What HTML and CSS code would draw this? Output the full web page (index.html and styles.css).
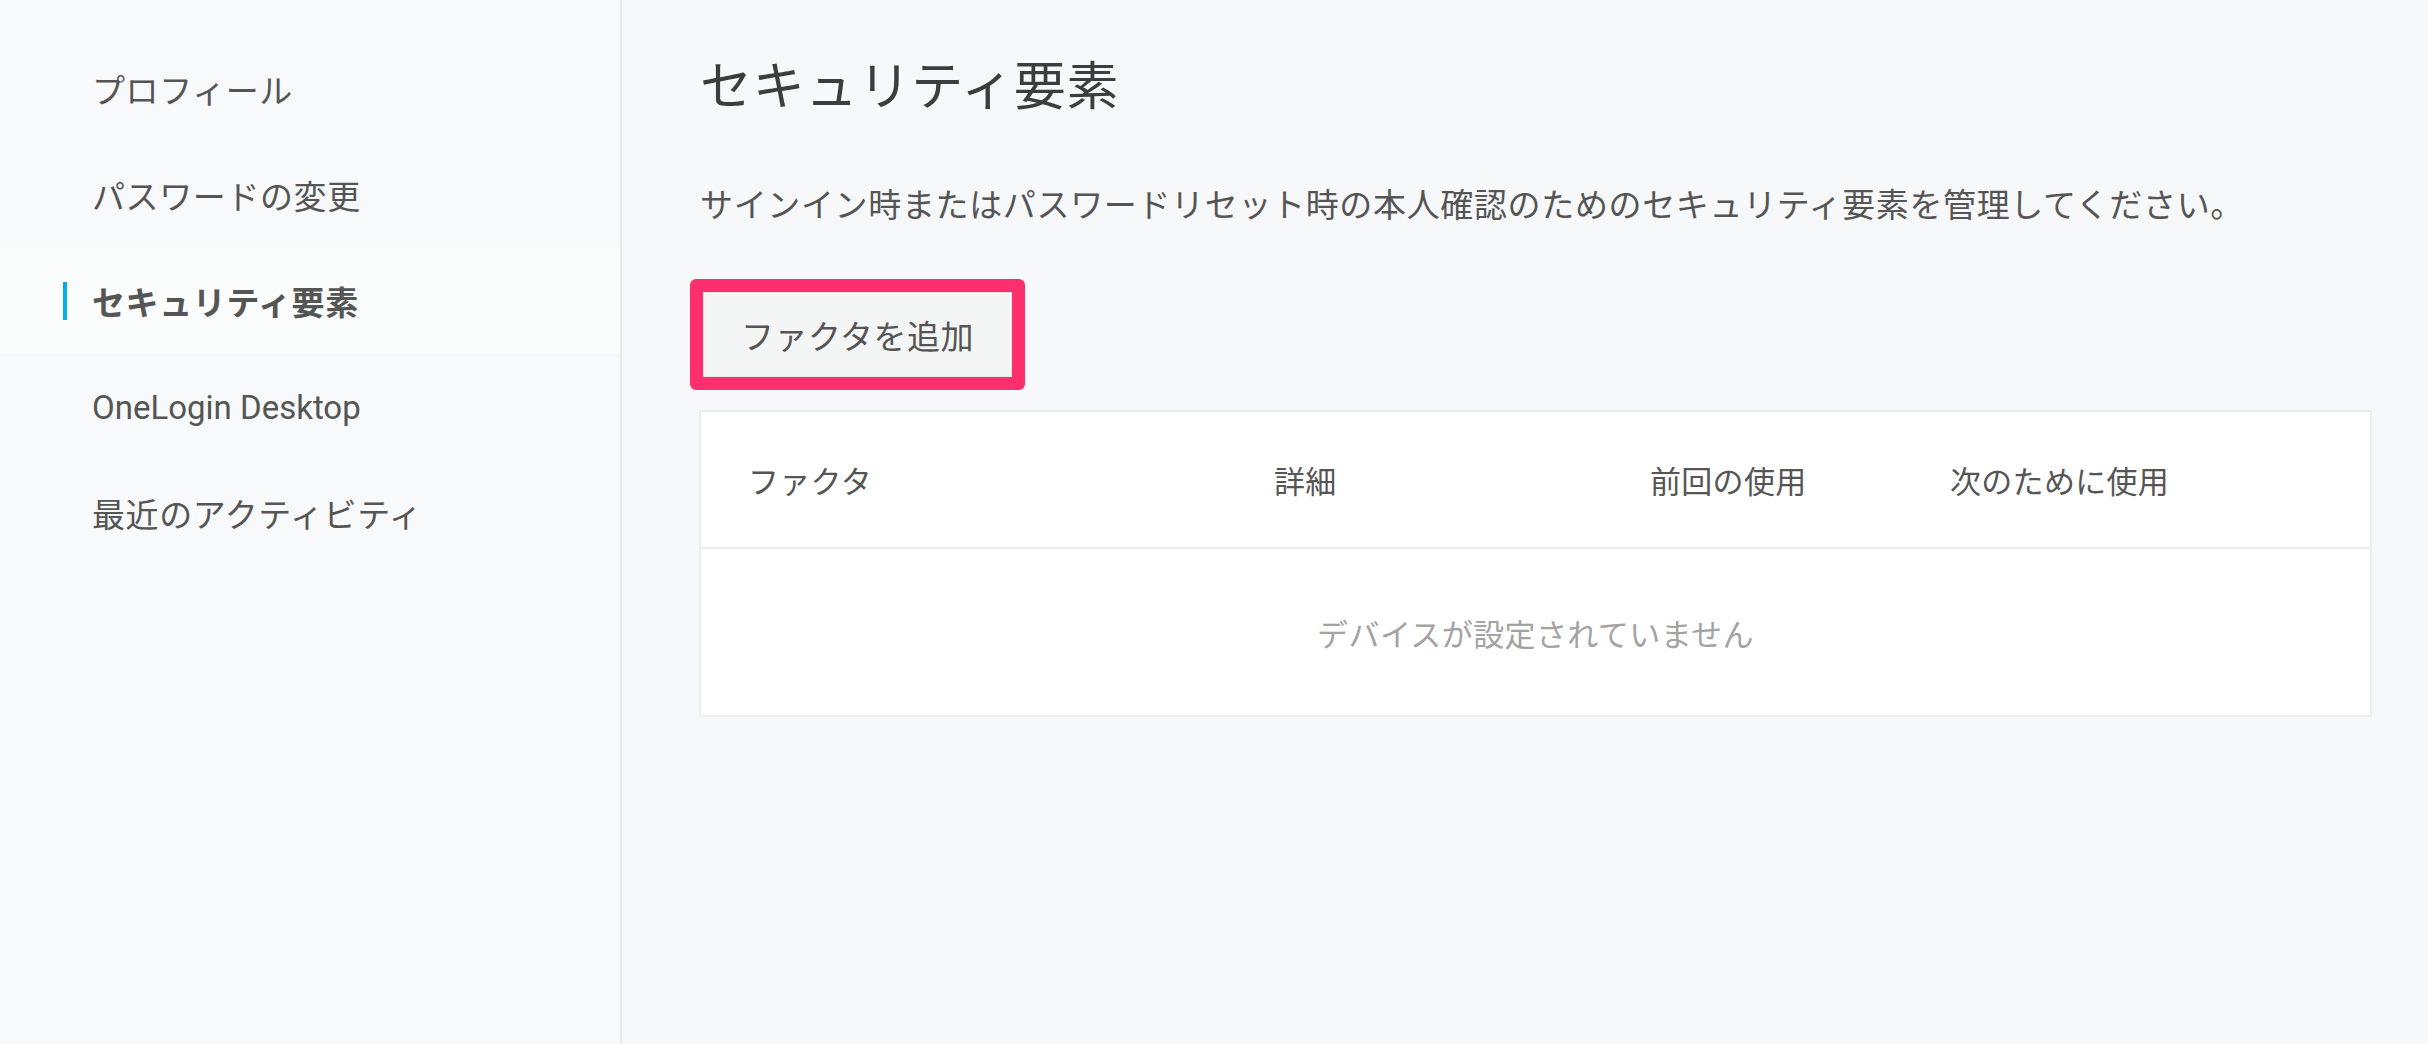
FILE: index.html
```html
<!DOCTYPE html>
<html lang="ja">

<head>
    <meta charset="UTF-8">
    <title>セキュリティ要素</title>
    <link rel="stylesheet" href="styles.css">
</head>

<body>
    <div class="page">
        <nav class="side-nav">
            <ul class="nav-list">
                <li class="nav-item">プロフィール</li>
                <li class="nav-item">パスワードの変更</li>
                <li class="nav-item active">セキュリティ要素</li>
                <li class="nav-item latin">OneLogin Desktop</li>
                <li class="nav-item">最近のアクティビティ</li>
            </ul>
        </nav>

        <main class="content">
            <h1 class="title">セキュリティ要素</h1>
            <p class="lead">サインイン時またはパスワードリセット時の本人確認のためのセキュリティ要素を管理してください。</p>

            <span class="highlight">
                <button class="btn-add">ファクタを追加</button>
            </span>

            <div class="factor-table">
                <div class="table-head">
                    <span>ファクタ</span>
                    <span>詳細</span>
                    <span>前回の使用</span>
                    <span>次のために使用</span>
                </div>
                <div class="table-empty">デバイスが設定されていません</div>
            </div>
        </main>
    </div>
</body>

</html>
```

FILE: styles.css
```css
* {
    box-sizing: border-box;
}

body {
    margin: 0;
    background-color: #f7f8fa;
    font-family: Roboto, "Noto Sans CJK JP", sans-serif;
    color: #555;
}

.page {
    display: flex;
    min-height: 100vh;
}

/* sidebar */
.side-nav {
    width: 622px;
    flex-shrink: 0;
    background-color: #f7f9fa;
    border-right: 2px solid #e7e9eb;
}

.nav-list {
    list-style: none;
    margin: 0;
    padding: 36px 0 0;
}

.nav-item {
    position: relative;
    display: flex;
    align-items: center;
    height: 106px;
    padding-left: 92px;
    font-size: 33px;
    letter-spacing: 0.6px;
    color: #555;
}

.nav-item.latin {
    letter-spacing: 0;
}

.nav-item.active {
    background-color: #fbfcfc;
    font-weight: 700;
}

.nav-item.active::before {
    content: '';
    position: absolute;
    left: 63px;
    top: 34px;
    width: 4px;
    height: 38px;
    background-color: #00aeef;
}

/* main */
.content {
    flex: 1;
    padding: 57px 56px 0 78px;
}

.title {
    margin: 0;
    font-size: 52px;
    font-weight: 400;
    line-height: 62px;
    letter-spacing: 0.8px;
    color: #3d3d3d;
}

.lead {
    margin: 67px 0 0;
    font-size: 33px;
    line-height: 40px;
    letter-spacing: 0.65px;
    color: #555;
}

.highlight {
    display: inline-block;
    margin: 53px 0 0 -10px;
    border: 13px solid #ff2e6c;
    border-radius: 6px;
}

.btn-add {
    display: block;
    width: 309px;
    height: 85px;
    margin: 0;
    padding: 0;
    border: 1px solid #e4e6e8;
    background-color: #f4f5f5;
    font-family: inherit;
    font-size: 33px;
    letter-spacing: 0.5px;
    color: #555;
}

.factor-table {
    margin: 20px 0 0 -1px;
    background-color: #fff;
    border: 2px solid #ebedef;
}

.table-head {
    display: grid;
    grid-template-columns: 526px 376px 300px 1fr;
    align-items: center;
    height: 137px;
    padding-left: 47px;
    border-bottom: 2px solid #ebedef;
    font-size: 31px;
    letter-spacing: 0.3px;
    color: #555;
}

.table-empty {
    display: flex;
    justify-content: center;
    align-items: center;
    height: 166px;
    font-size: 31px;
    letter-spacing: 0.4px;
    color: #a3a3a3;
}
```
